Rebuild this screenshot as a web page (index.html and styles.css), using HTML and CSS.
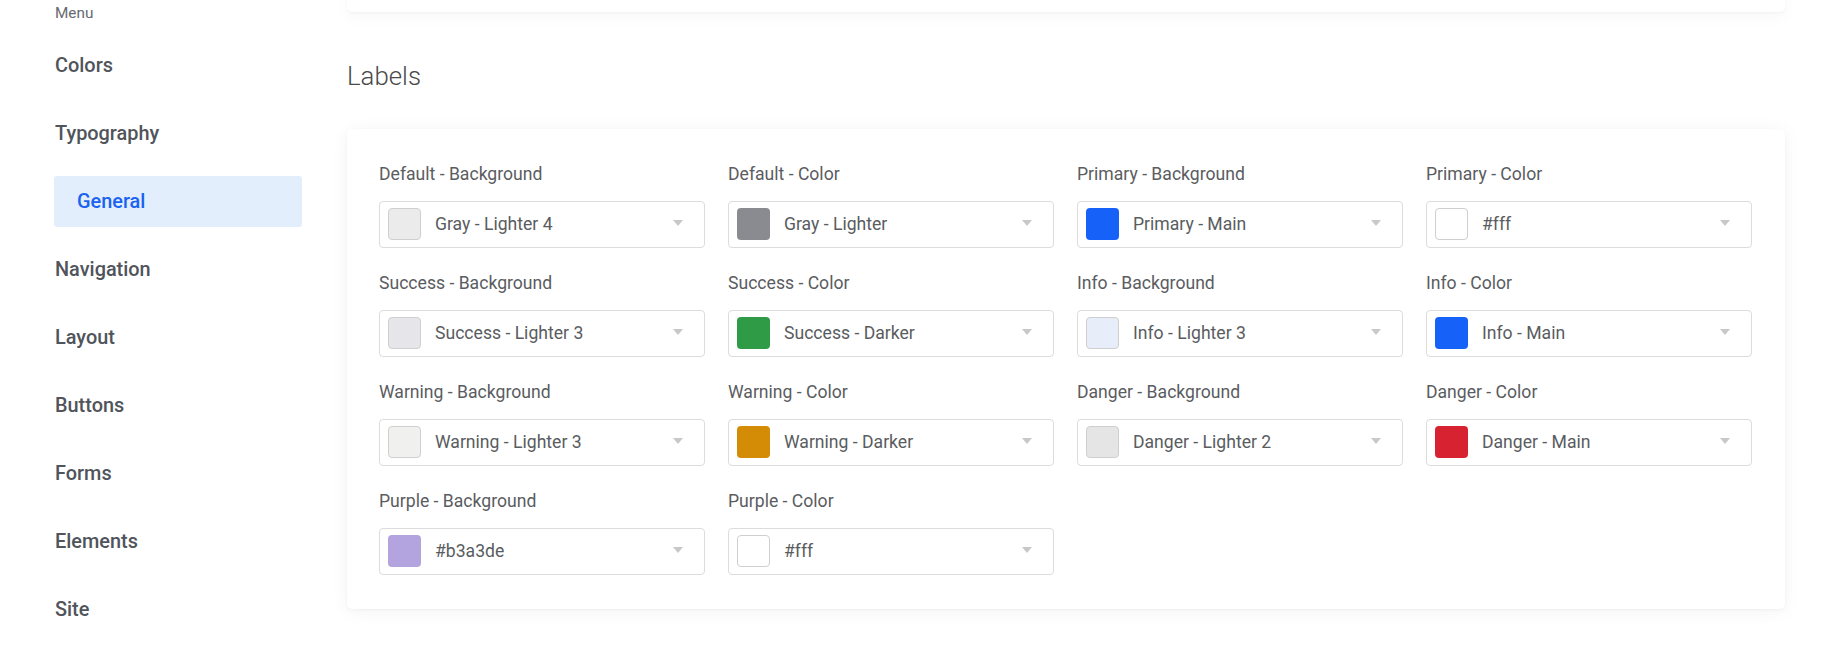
FILE: index.html
```html
<!DOCTYPE html>
<html lang="en">
<head>
<meta charset="utf-8">
<title>Labels</title>
<link rel="stylesheet" href="styles.css">
</head>
<body>
<div class="page">
  <aside class="sidebar">
    <div class="menu-title">Menu</div>
    <nav class="nav">
      <a class="nav-item">Colors</a>
      <a class="nav-item">Typography</a>
      <a class="nav-item nav-sub active">General</a>
      <a class="nav-item">Navigation</a>
      <a class="nav-item">Layout</a>
      <a class="nav-item">Buttons</a>
      <a class="nav-item">Forms</a>
      <a class="nav-item">Elements</a>
      <a class="nav-item">Site</a>
    </nav>
  </aside>
  <main class="main">
    <div class="card card-top"></div>
    <h2 class="section-title">Labels</h2>
    <div class="card card-form">
      <div class="grid">
        <div class="field"><div class="label">Default - Background</div><div class="select"><span class="swatch light sw-gray4"></span><span class="value">Gray - Lighter 4</span><span class="caret"></span></div></div>
        <div class="field"><div class="label">Default - Color</div><div class="select"><span class="swatch sw-gray"></span><span class="value">Gray - Lighter</span><span class="caret"></span></div></div>
        <div class="field"><div class="label">Primary - Background</div><div class="select"><span class="swatch sw-primary"></span><span class="value">Primary - Main</span><span class="caret"></span></div></div>
        <div class="field"><div class="label">Primary - Color</div><div class="select"><span class="swatch light sw-white"></span><span class="value">#fff</span><span class="caret"></span></div></div>

        <div class="field"><div class="label">Success - Background</div><div class="select"><span class="swatch light sw-success3"></span><span class="value">Success - Lighter 3</span><span class="caret"></span></div></div>
        <div class="field"><div class="label">Success - Color</div><div class="select"><span class="swatch sw-success"></span><span class="value">Success - Darker</span><span class="caret"></span></div></div>
        <div class="field"><div class="label">Info - Background</div><div class="select"><span class="swatch light sw-info3"></span><span class="value">Info - Lighter 3</span><span class="caret"></span></div></div>
        <div class="field"><div class="label">Info - Color</div><div class="select"><span class="swatch sw-primary"></span><span class="value">Info - Main</span><span class="caret"></span></div></div>

        <div class="field"><div class="label">Warning - Background</div><div class="select"><span class="swatch light sw-warning3"></span><span class="value">Warning - Lighter 3</span><span class="caret"></span></div></div>
        <div class="field"><div class="label">Warning - Color</div><div class="select"><span class="swatch sw-warning"></span><span class="value">Warning - Darker</span><span class="caret"></span></div></div>
        <div class="field"><div class="label">Danger - Background</div><div class="select"><span class="swatch light sw-danger2"></span><span class="value">Danger - Lighter 2</span><span class="caret"></span></div></div>
        <div class="field"><div class="label">Danger - Color</div><div class="select"><span class="swatch sw-danger"></span><span class="value">Danger - Main</span><span class="caret"></span></div></div>

        <div class="field"><div class="label">Purple - Background</div><div class="select"><span class="swatch sw-purple"></span><span class="value">#b3a3de</span><span class="caret"></span></div></div>
        <div class="field"><div class="label">Purple - Color</div><div class="select"><span class="swatch light sw-white"></span><span class="value">#fff</span><span class="caret"></span></div></div>
      </div>
    </div>
  </main>
</div>
</body>
</html>
```

FILE: styles.css
```css
* { box-sizing: border-box; }

html, body {
  margin: 0;
  padding: 0;
  background: #ffffff;
  font-family: Roboto, "Liberation Sans", Arial, sans-serif;
  overflow: hidden;
}

.page {
  display: flex;
  align-items: flex-start;
  width: 1840px;
  height: 654px;
}

/* Sidebar */
.sidebar {
  flex: none;
  width: 347px;
  padding-left: 54px;
  padding-top: 4px;
}

.menu-title {
  padding-left: 1px;
  font-size: 15.3px;
  line-height: 18px;
  color: #666a70;
}

.nav {
  display: flex;
  flex-direction: column;
  gap: 16.5px;
  width: 248px;
  margin-top: 17.5px;
}

.nav-item {
  display: block;
  height: 51.6px;
  line-height: 51.6px;
  padding-left: 1px;
  font-size: 19.9px;
  font-weight: 500;
  color: #50545b;
  border-radius: 3px;
}

.nav-sub {
  padding-left: 23px;
}

.nav-item.active {
  background: #e3eefc;
  color: #1a62f0;
}

/* Main */
.main {
  flex: none;
  width: 1438px;
}

.card {
  background: #ffffff;
  border-radius: 5px;
  box-shadow: 0 1px 3px rgba(0, 0, 0, 0.04), 0 2px 18px rgba(0, 0, 0, 0.05);
}

.card-top {
  height: 12px;
  border-radius: 0 0 5px 5px;
}

.section-title {
  margin: 48.5px 0 37.5px 0;
  font-size: 25.8px;
  line-height: 31px;
  font-weight: 300;
  color: #4a4a4a;
}

.card-form {
  padding: 35px 33px 34px 32px;
}

.grid {
  display: grid;
  grid-template-columns: repeat(4, 1fr);
  column-gap: 23px;
  row-gap: 25.5px;
}

.label {
  font-size: 17.6px;
  line-height: 21px;
  color: #5a5c5f;
  margin-bottom: 15.5px;
  white-space: nowrap;
}

.select {
  display: flex;
  align-items: center;
  height: 47px;
  padding: 0 20px 0 8px;
  border: 1px solid #dcdcdc;
  border-radius: 4px;
  background: #ffffff;
}

.swatch {
  flex: none;
  width: 33px;
  height: 32px;
  border-radius: 4px;
  margin-right: 14px;
}

.swatch.light {
  border: 1px solid #cfcfcf;
}

.value {
  flex: 1;
  font-size: 17.6px;
  color: #595c60;
  white-space: nowrap;
}

.caret {
  flex: none;
  width: 0;
  height: 0;
  border-left: 5px solid transparent;
  border-right: 5px solid transparent;
  border-top: 6px solid #c8c8c8;
  margin-top: -2px;
  margin-right: 1px;
}

.sw-gray4 { background: #ebebeb; }
.sw-gray { background: #8a8b90; }
.sw-primary { background: #1662f8; }
.sw-white { background: #ffffff; border-color: #d9d9d9; }
.sw-success3 { background: #e6e6ea; }
.sw-success { background: #2f9b47; }
.sw-info3 { background: #e7edf9; border-color: #c4cde2; }
.sw-warning3 { background: #f0f0ef; }
.sw-warning { background: #d48b06; }
.sw-danger2 { background: #e5e5e5; border-color: #bdbdbd; }
.sw-danger { background: #d72231; }
.sw-purple { background: #b3a3de; }
```
